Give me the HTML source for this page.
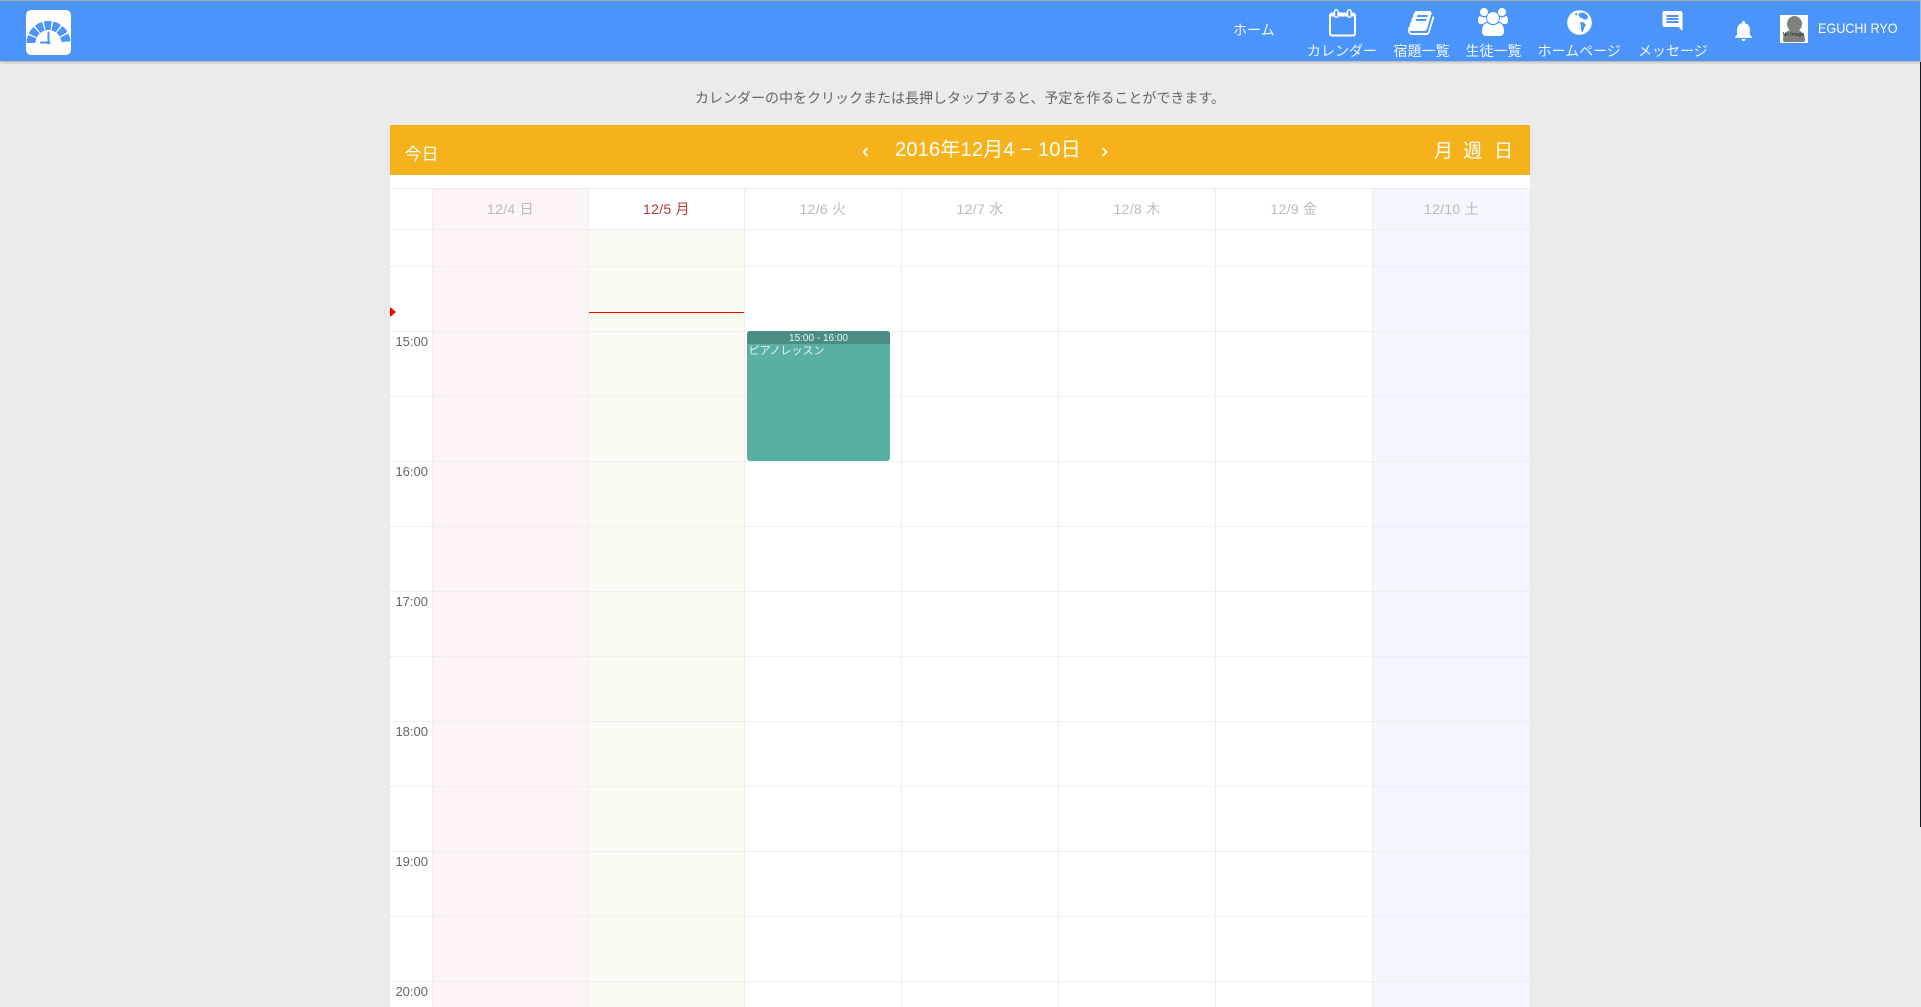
<!DOCTYPE html>
<html lang="ja">
<head>
<meta charset="utf-8">
<title>カレンダー</title>
<style>
html,body{margin:0;padding:0;width:1921px;height:1007px;overflow:hidden;background:#ebebeb;font-family:"Liberation Sans","Noto Sans CJK JP",sans-serif;}
.a{position:absolute;}
.t{position:absolute;white-space:nowrap;}
.c{text-align:center;}
.nav{color:#f2f7ff;font-size:14px;line-height:20px;top:41px;}
.h{position:absolute;left:390px;width:1140px;height:1px;background:#eeeeee;}
.d{position:absolute;left:390px;width:1140px;height:0;border-top:1px dotted #e8e8e8;}
.v{position:absolute;top:188px;width:1px;height:819px;background:#eeeeee;}
.col{position:absolute;top:188px;height:819px;}
.dh{position:absolute;top:199px;height:20px;line-height:20px;font-size:14px;letter-spacing:.3px;color:#bbbbbb;text-align:center;white-space:nowrap;}
.tm{position:absolute;left:392px;width:36px;text-align:right;font-size:13px;line-height:20px;color:#666;}
.bar{color:#fff;}
</style>
</head>
<body>
<div class="a" style="left:0;top:0;width:1921px;height:1007px;overflow:hidden;">

<!-- header -->
<div class="a" style="left:0;top:0;width:1921px;height:61px;background:#4a94fb;border-top:1px solid #a8a8a8;box-sizing:border-box;box-shadow:0 1px 3px rgba(0,0,0,.3);"></div>

<!-- logo -->
<div class="a" style="left:26px;top:10px;width:45px;height:45px;background:#fff;border-radius:5px;"></div>
<svg class="a" style="left:26px;top:10px;" width="45" height="45" viewBox="0 0 45 45">
  <path d="M5 33 A17.500 17.500 0 0 1 40 33" fill="none" stroke="#4a94fb" stroke-width="9" stroke-dasharray="6.500 1.350"/>
  <path d="M22.500 22.500V32.500H15" fill="none" stroke="#4a94fb" stroke-width="2" stroke-linecap="round"/>
  <circle cx="22.500" cy="32.500" r="1.800" fill="#4a94fb"/>
</svg>

<!-- nav -->
<div class="t" style="left:1233px;top:20px;color:#f2f7ff;font-size:14px;line-height:20px;">ホーム</div>

<svg class="a" style="left:1328px;top:8px;" width="30" height="30" viewBox="0 0 30 30">
  <rect x="2" y="5.500" width="25" height="22" rx="2" fill="none" stroke="#fff" stroke-width="2"/>
  <rect x="2" y="5" width="25" height="3.500" fill="#fff"/>
  <rect x="6.500" y="1.800" width="3.600" height="7.500" rx="1.800" fill="#4a94fb" stroke="#fff" stroke-width="1.400"/>
  <rect x="19.500" y="1.800" width="3.600" height="7.500" rx="1.800" fill="#4a94fb" stroke="#fff" stroke-width="1.400"/>
</svg>
<svg class="a" style="left:1408px;top:9px;" width="28" height="28" viewBox="0 0 1792 1792">
  <path fill="#fff" d="M1639 478q40 57 18 129l-275 906q-19 64-76.500 107.500t-122.500 43.500h-923q-77 0-148.500-53.500t-99.500-131.500q-24-67-2-127 0-4 3-27t4-37q1-8-3-21.500t-3-19.500q2-11 8-21t16.500-23.500 16.500-23.500q23-38 45-91.500t30-91.500q3-10 .5-30t-.5-28q3-11 17-28t17-23q21-36 42-92t25-90q1-9-2.500-32t.5-28q4-13 22-30.500t22-22.500q19-26 42.500-84.500t27.500-96.500q1-8-3-25.500t-2-26.500q2-8 9-18t18-23 17-21q8-12 16.500-30.500t15-35 16-36 19.500-32 26.500-23.500 36-11.500 47.500 5.500l-1 3q38-9 51-9h761q74 0 114 56t18 130l-274 906q-36 119-71.500 153.500t-128.500 34.500h-869q-27 0-38 15-11 16-1 43 24 70 144 70h923q29 0 56-15.500t35-41.500l300-987q7-22 5-57 38 15 59 43zm-1064 2q-4 13 2 22.500t20 9.500h608q13 0 25.500-9.500t16.500-22.500l21-64q4-13-2-22.500t-20-9.500h-608q-13 0-25.500 9.500t-16.500 22.500zm-83 256q-4 13 2 22.500t20 9.500h608q13 0 25.500-9.500t16.500-22.500l21-64q4-13-2-22.500t-20-9.500h-608q-13 0-25.500 9.500t-16.500 22.500z"/>
</svg>
<svg class="a" style="left:1478px;top:8px;" width="30" height="28" viewBox="0 0 1920 1792">
  <path fill="#fff" d="M593 896q-162 5-265 128h-134q-82 0-138-40.500t-56-118.500q0-353 124-353 6 0 43.500 21t97.500 42.500 119 21.500q67 0 133-23-5 37-5 66 0 139 81 256zm1071 637q0 120-73 189.500t-194 69.500h-874q-121 0-194-69.500t-73-189.500q0-53 3.500-103.500t14-109 26.500-108.500 43-97.500 62-81 85.500-53.500 111.500-20q10 0 43 21.500t73 48 107 48 135 21.500 135-21.500 107-48 73-48 43-21.500q61 0 111.500 20t85.500 53.500 62 81 43 97.500 26.500 108.500 14 109 3.500 103.500zm-1024-1277q0 106-75 181t-181 75-181-75-75-181 75-181 181-75 181 75 75 181zm704 384q0 159-112.500 271.500t-271.500 112.500-271.500-112.500-112.500-271.500 112.500-271.500 271.500-112.500 271.500 112.500 112.500 271.500zm576 225q0 78-56 118.500t-138 40.500h-134q-103-123-265-128 81-117 81-256 0-29-5-66 66 23 133 23 59 0 119-21.500t97.500-42.500 43.500-21q124 0 124 353zm-128-609q0 106-75 181t-181 75-181-75-75-181 75-181 181-75 181 75 75 181z"/>
</svg>
<svg class="a" style="left:1567px;top:10px;" width="25" height="25" viewBox="0 0 25 25">
  <circle cx="12.500" cy="12.500" r="12.300" fill="#fff"/>
  <path fill="#4a94fb" d="M12 3 L17 2.500 L21 6 L20.500 9 L17.500 9.800 L15 8 L13 7.500 L11.500 5 Z"/>
  <path fill="#4a94fb" d="M13 12 L17 12.500 L18.800 15 L17.200 18 L15.500 22.500 L14 20 L14 16 Z"/>
  <path fill="#4a94fb" d="M8 3.500 L10 3 L10.200 5 L8.500 5.500 Z"/>
</svg>
<svg class="a" style="left:1662px;top:11px;" width="21" height="20" viewBox="2 2 20 20">
  <g transform="translate(24,0) scale(-1,1)"><path fill="#fff" d="M20 2H4c-1.100 0-2 .9-2 2v18l4-4h14c1.100 0 2-.9 2-2V4c0-1.100-.9-2-2-2zm-2 12H6v-2h12v2zm0-3H6V9h12v2zm0-3H6V6h12v2z"/></g>
</svg>
<svg class="a" style="left:1735px;top:21px;" width="17" height="20" viewBox="4 2.500 16 19.500" preserveAspectRatio="none">
  <path fill="#fff" d="M12 22c1.100 0 2-.9 2-2h-4c0 1.100.89 2 2 2zm6-6v-5c0-3.070-1.640-5.640-4.500-6.320V4c0-.83-.67-1.500-1.500-1.500s-1.500.67-1.500 1.500v.68C7.630 5.360 6 7.920 6 11v5l-2 2v1h16v-1l-2-2z"/>
</svg>

<div class="t nav" style="left:1307px;">カレンダー</div>
<div class="t nav" style="left:1393.500px;">宿題一覧</div>
<div class="t nav" style="left:1465.500px;">生徒一覧</div>
<div class="t nav" style="left:1537.500px;">ホームページ</div>
<div class="t nav" style="left:1638px;">メッセージ</div>

<!-- avatar -->
<div class="a" style="left:1780px;top:15px;width:28px;height:28px;background:#fff;overflow:hidden;">
  <div class="a" style="left:6.500px;top:1px;width:15px;height:16px;border-radius:50%;background:#808080;"></div>
  <div class="a" style="left:3px;top:15px;width:22px;height:12px;border-radius:9px 9px 2px 2px;background:#808080;"></div>
  <div class="t" style="left:2.500px;top:17px;font-size:5px;line-height:6px;color:#222;">No Image</div>
</div>
<div class="t" style="left:1818px;top:18px;color:#fff;font-size:14px;line-height:20px;transform:scaleX(.9);transform-origin:left center;">EGUCHI RYO</div>

<!-- description -->
<div class="t" style="left:680px;top:88px;width:560px;text-align:center;font-size:14px;line-height:20px;color:#666;">カレンダーの中をクリックまたは長押しタップすると、予定を作ることができます。</div>

<!-- calendar -->
<div class="a" style="left:390px;top:125px;width:1140px;height:882px;background:#fff;"></div>
<div class="a" style="left:390px;top:125px;width:1140px;height:50px;background:#f5b21a;"></div>
<div class="t bar" style="left:404.500px;top:142.500px;font-size:17px;line-height:24px;">今日</div>
<svg class="a" style="left:860px;top:145px;" width="11" height="14" viewBox="0 0 11 14"><path d="M7.500 3 L3.500 7 L7.500 11" fill="none" stroke="#fff" stroke-width="1.800"/></svg>
<div class="t bar" style="left:895px;top:137px;font-size:20px;line-height:26px;letter-spacing:.2px;">2016年12月4 − 10日</div>
<svg class="a" style="left:1099px;top:145px;" width="11" height="14" viewBox="0 0 11 14"><path d="M3.500 3 L7.500 7 L3.500 11" fill="none" stroke="#fff" stroke-width="1.800"/></svg>
<div class="t bar" style="left:1434px;top:139px;font-size:19px;line-height:26px;">月</div>
<div class="t bar" style="left:1463px;top:139px;font-size:19px;line-height:26px;">週</div>
<div class="t bar" style="left:1494px;top:139px;font-size:19px;line-height:26px;">日</div>

<!-- column backgrounds -->
<div class="col" style="left:433px;width:155px;background:#fdf5f5;"></div>
<div class="col" style="left:589px;width:155px;top:229px;height:778px;background:#fbfbf3;"></div>
<div class="col" style="left:1373px;width:157px;background:#f1f7fd;"></div>

<!-- horizontal lines -->
<div class="h" style="top:188px;"></div>
<div class="h" style="top:229px;"></div>
<div class="d" style="top:266px;"></div>
<div class="h" style="top:331px;"></div>
<div class="d" style="top:396px;"></div>
<div class="h" style="top:461px;"></div>
<div class="d" style="top:526px;"></div>
<div class="h" style="top:591px;"></div>
<div class="d" style="top:656px;"></div>
<div class="h" style="top:721px;"></div>
<div class="d" style="top:786px;"></div>
<div class="h" style="top:851px;"></div>
<div class="d" style="top:916px;"></div>
<div class="h" style="top:981px;"></div>

<!-- vertical lines -->
<div class="v" style="left:432px;"></div>
<div class="v" style="left:588px;"></div>
<div class="v" style="left:744px;"></div>
<div class="v" style="left:901px;"></div>
<div class="v" style="left:1058px;"></div>
<div class="v" style="left:1215px;"></div>
<div class="v" style="left:1372px;"></div>

<!-- day headers -->
<div class="dh" style="left:433px;width:155px;">12/4 日</div>
<div class="dh" style="left:589px;width:155px;color:#b53a3a;">12/5 月</div>
<div class="dh" style="left:745px;width:156px;">12/6 火</div>
<div class="dh" style="left:902px;width:156px;">12/7 水</div>
<div class="dh" style="left:1059px;width:156px;">12/8 木</div>
<div class="dh" style="left:1216px;width:156px;">12/9 金</div>
<div class="dh" style="left:1373px;width:157px;">12/10 土</div>

<!-- times -->
<div class="tm" style="top:332px;">15:00</div>
<div class="tm" style="top:462px;">16:00</div>
<div class="tm" style="top:592px;">17:00</div>
<div class="tm" style="top:722px;">18:00</div>
<div class="tm" style="top:852px;">19:00</div>
<div class="tm" style="top:982px;">20:00</div>

<!-- now marker -->
<div class="a" style="left:589px;top:312px;width:155px;height:1px;background:#f00;"></div>
<svg class="a" style="left:390px;top:307px;" width="7" height="10" viewBox="0 0 7 10"><path d="M0 0 L6 5 L0 10 Z" fill="#f00"/></svg>

<!-- event -->
<div class="a" style="left:747px;top:331px;width:143px;height:130px;background:#5aafa3;border-radius:3px;overflow:hidden;">
  <div class="a" style="left:0;top:0;width:143px;height:13px;background:#4a8d82;"></div>
  <div class="t c" style="left:0;top:.5px;width:143px;font-size:10px;line-height:13px;color:#eef6f4;">15:00 - 16:00</div>
  <div class="t" style="left:1.500px;top:13px;font-size:11px;line-height:14px;color:#e8f4f2;">ピアノレッスン</div>
</div>

<!-- right edge strip -->
<div class="a" style="left:1920px;top:0;width:1px;height:62px;background:#a3bdd8;"></div>
<div class="a" style="left:1920px;top:62px;width:1px;height:765px;background:#121a22;"></div>
</div>
</body>
</html>
